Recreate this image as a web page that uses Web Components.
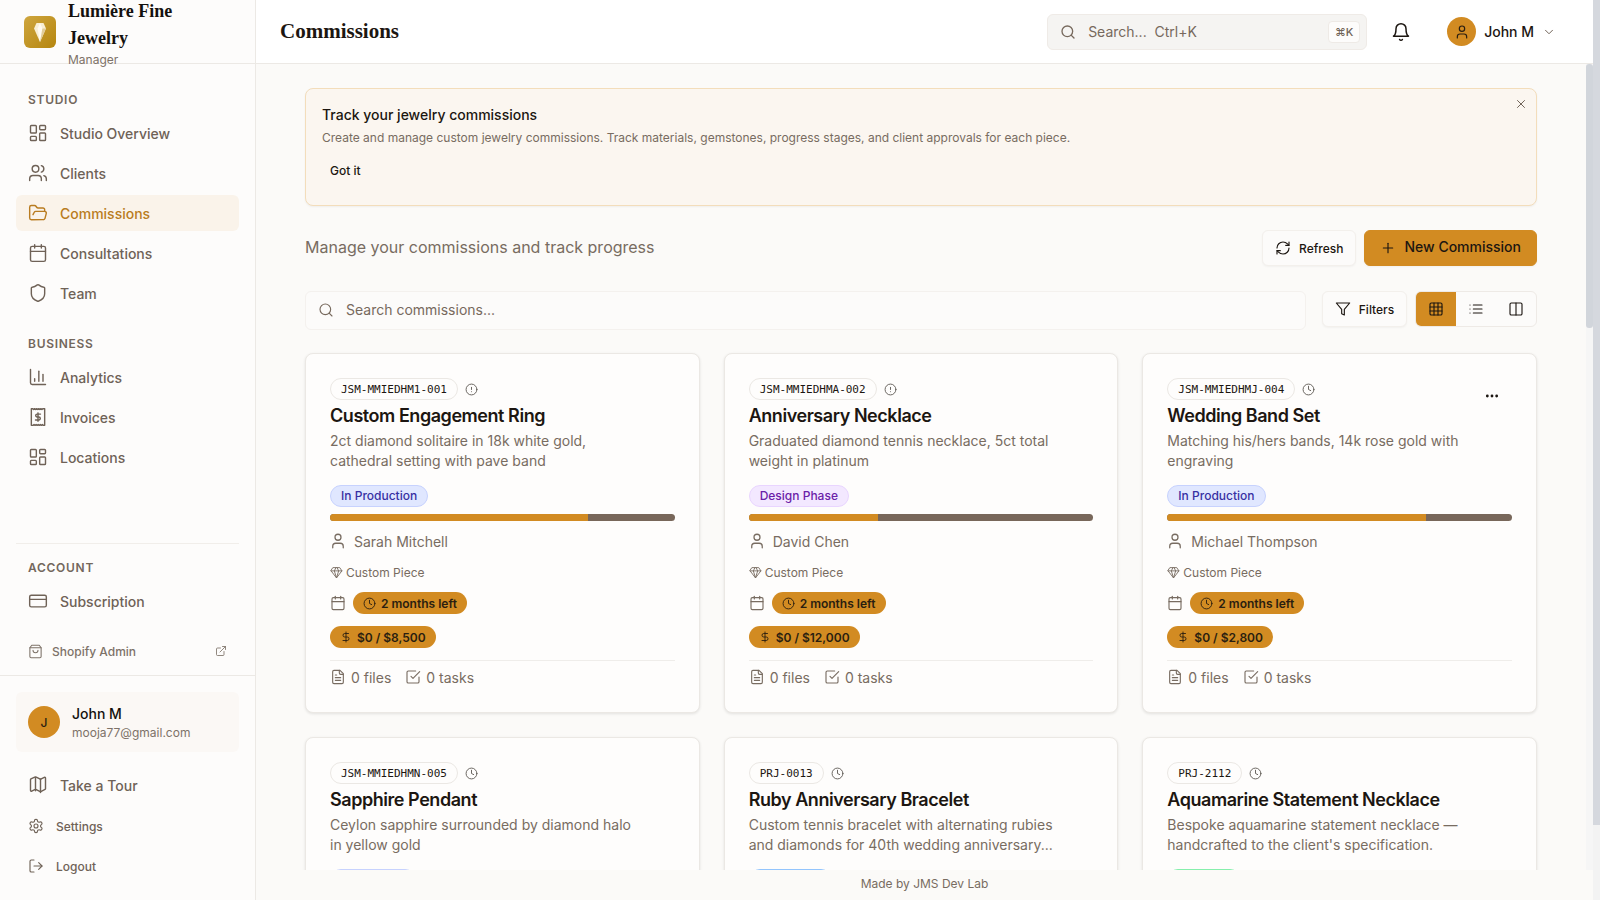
<!DOCTYPE html>
<html lang="en"><head><meta charset="utf-8"><title>Commissions</title>
<style>
html,body{margin:0;height:100%;overflow:hidden}
body{font-family:Inter,"Liberation Sans",sans-serif;background:#fbfaf8;color:#1c1611}
</style></head><body>
<app-shell></app-shell>
<script>
const P={
grid:'<rect x="3" y="3" width="7" height="9" rx="1"/><rect x="14" y="3" width="7" height="5" rx="1"/><rect x="14" y="12" width="7" height="9" rx="1"/><rect x="3" y="16" width="7" height="5" rx="1"/>',
users:'<path d="M16 21v-2a4 4 0 0 0-4-4H6a4 4 0 0 0-4 4v2"/><circle cx="9" cy="7" r="4"/><path d="M22 21v-2a4 4 0 0 0-3-3.87"/><path d="M16 3.13a4 4 0 0 1 0 7.75"/>',
folder:'<path d="m6 14 1.5-2.9A2 2 0 0 1 9.24 10H20a2 2 0 0 1 1.94 2.5l-1.54 6a2 2 0 0 1-1.95 1.5H4a2 2 0 0 1-2-2V5a2 2 0 0 1 2-2h3.9a2 2 0 0 1 1.69.9l.81 1.2a2 2 0 0 0 1.67.9H18a2 2 0 0 1 2 2v2"/>',
cal:'<path d="M8 2v4"/><path d="M16 2v4"/><rect x="3" y="4" width="18" height="18" rx="2"/><path d="M3 10h18"/>',
shield:'<path d="M20 13c0 5-3.5 7.5-7.66 8.95a1 1 0 0 1-.67-.01C7.5 20.5 4 18 4 13V6a1 1 0 0 1 1-1c2 0 4.5-1.2 6.24-2.72a1.17 1.17 0 0 1 1.52 0C14.51 3.81 17 5 19 5a1 1 0 0 1 1 1z"/>',
chart:'<path d="M3 3v16a2 2 0 0 0 2 2h16"/><path d="M18 17V9"/><path d="M13 17V5"/><path d="M8 17v-3"/>',
receipt:'<path d="M4 2h1.5l1.25 1 1.25-1 1.25 1 1.25-1 1.25 1 1.25-1 1.25 1 1.25-1 1.25 1L18 2h2v20h-1.5l-1.25-1-1.25 1-1.25-1-1.25 1-1.25-1-1.25 1-1.25-1-1.25 1-1.25-1L6 22H4z"/><path d="M15 8.5h-4a1.75 1.75 0 0 0 0 3.5h2a1.75 1.75 0 0 1 0 3.5H9"/><path d="M12 17V7"/>',
card:'<rect width="20" height="14" x="2" y="5" rx="2"/><path d="M2 10h20"/>',
bag:'<path d="M6 2 3 6v14a2 2 0 0 0 2 2h14a2 2 0 0 0 2-2V6l-3-4Z"/><path d="M3 6h18"/><path d="M16 10a4 4 0 0 1-8 0"/>',
ext:'<path d="M15 3h6v6"/><path d="M10 14 21 3"/><path d="M18 13v6a2 2 0 0 1-2 2H5a2 2 0 0 1-2-2V8a2 2 0 0 1 2-2h6"/>',
map:'<path d="M14.1 4.55a2 2 0 0 0 1.8 0l3.65-1.83A1 1 0 0 1 21 3.62v12.76a1 1 0 0 1-.55.9l-4.55 2.27a2 2 0 0 1-1.8 0l-4.2-2.1a2 2 0 0 0-1.8 0l-3.65 1.83A1 1 0 0 1 3 18.38V5.62a1 1 0 0 1 .55-.9L8.1 2.45a2 2 0 0 1 1.8 0z"/><path d="M15 5v16"/><path d="M9 3v16"/>',
gear:'<path d="M12.22 2h-.44a2 2 0 0 0-2 2v.18a2 2 0 0 1-1 1.73l-.43.25a2 2 0 0 1-2 0l-.15-.08a2 2 0 0 0-2.73.73l-.22.38a2 2 0 0 0 .73 2.73l.15.1a2 2 0 0 1 1 1.72v.51a2 2 0 0 1-1 1.74l-.15.09a2 2 0 0 0-.73 2.73l.22.38a2 2 0 0 0 2.73.73l.15-.08a2 2 0 0 1 2 0l.43.25a2 2 0 0 1 1 1.73V20a2 2 0 0 0 2 2h.44a2 2 0 0 0 2-2v-.18a2 2 0 0 1 1-1.73l.43-.25a2 2 0 0 1 2 0l.15.08a2 2 0 0 0 2.73-.73l.22-.39a2 2 0 0 0-.73-2.73l-.15-.08a2 2 0 0 1-1-1.74v-.5a2 2 0 0 1 1-1.74l.15-.09a2 2 0 0 0 .73-2.73l-.22-.38a2 2 0 0 0-2.73-.73l-.15.08a2 2 0 0 1-2 0l-.43-.25a2 2 0 0 1-1-1.73V4a2 2 0 0 0-2-2z"/><circle cx="12" cy="12" r="3"/>',
logout:'<path d="M9 21H5a2 2 0 0 1-2-2V5a2 2 0 0 1 2-2h4"/><path d="m16 17 5-5-5-5"/><path d="M21 12H9"/>',
search:'<circle cx="11" cy="11" r="8"/><path d="m21 21-4.3-4.3"/>',
bell:'<path d="M6 8a6 6 0 0 1 12 0c0 7 3 9 3 9H3s3-2 3-9"/><path d="M10.3 21a1.94 1.94 0 0 0 3.4 0"/>',
user:'<path d="M19 21v-2a4 4 0 0 0-4-4H9a4 4 0 0 0-4 4v2"/><circle cx="12" cy="7" r="4"/>',
chev:'<path d="m6 9 6 6 6-6"/>',
x:'<path d="M18 6 6 18"/><path d="m6 6 12 12"/>',
refresh:'<path d="M3 12a9 9 0 0 1 9-9 9.75 9.75 0 0 1 6.74 2.74L21 8"/><path d="M21 3v5h-5"/><path d="M21 12a9 9 0 0 1-9 9 9.75 9.75 0 0 1-6.74-2.74L3 16"/><path d="M8 16H3v5"/>',
plus:'<path d="M5 12h14"/><path d="M12 5v14"/>',
filter:'<polygon points="22 3 2 3 10 12.46 10 19 14 21 14 12.46 22 3"/>',
table:'<rect width="18" height="18" x="3" y="3" rx="2"/><path d="M3 9h18"/><path d="M3 15h18"/><path d="M9 3v18"/><path d="M15 3v18"/>',
list:'<path d="M8 6h13"/><path d="M8 12h13"/><path d="M8 18h13"/><path d="M3 6h.01"/><path d="M3 12h.01"/><path d="M3 18h.01"/>',
columns:'<rect width="18" height="18" x="3" y="3" rx="2"/><path d="M12 3v18"/>',
alert:'<circle cx="12" cy="12" r="10"/><path d="M12 8v4"/><path d="M12 16h.01"/>',
clock:'<circle cx="12" cy="12" r="10"/><path d="M12 6v6l4 2"/>',
gem:'<path d="M6 3h12l4 6-10 13L2 9Z"/><path d="M11 3 8 9l4 13 4-13-3-6"/><path d="M2 9h20"/>',
dollar:'<path d="M12 2v20"/><path d="M17 5H9.5a3.5 3.5 0 0 0 0 7h5a3.5 3.5 0 0 1 0 7H6"/>',
file:'<path d="M15 2H6a2 2 0 0 0-2 2v16a2 2 0 0 0 2 2h12a2 2 0 0 0 2-2V7Z"/><path d="M14 2v4a2 2 0 0 0 2 2h4"/><path d="M10 9H8"/><path d="M16 13H8"/><path d="M16 17H8"/>',
check:'<path d="m9 11 3 3L22 4"/><path d="M21 12v7a2 2 0 0 1-2 2H5a2 2 0 0 1-2-2V5a2 2 0 0 1 2-2h11"/>',
dots:'<circle cx="12" cy="12" r="1"/><circle cx="19" cy="12" r="1"/><circle cx="5" cy="12" r="1"/>'
};
const ic=(n,s,c='currentColor',w=2)=>`<svg xmlns="http://www.w3.org/2000/svg" width="${s}" height="${s}" viewBox="0 0 24 24" fill="none" stroke="${c}" stroke-width="${w}" stroke-linecap="round" stroke-linejoin="round" style="display:block;flex:none">${P[n]}</svg>`;
const def=(name,css,html)=>{customElements.define(name,class extends HTMLElement{
 connectedCallback(){const r=this.attachShadow({mode:'open'});r.innerHTML=`<style>${css}</style>`+(typeof html==='function'?html(this):html);}
});};

def('side-link',`:host{display:flex;align-items:center;gap:var(--g,12px);height:var(--h,36px);padding:0 12px;border-radius:6px;color:#6f6257;font-size:var(--fs,14px);font-weight:500;margin-bottom:var(--mb,4px)}
:host([active]){background:#faf3ea;color:#b97c21}`,h=>ic(h.getAttribute('icon'),+h.getAttribute('size')||20,'currentColor',1.7)+`<slot></slot>`);

def('side-group',`:host{display:block;padding:0 16px}
h3{margin:0;padding:0 12px;font-size:12px;font-weight:600;letter-spacing:.72px;color:#73675c;height:20px;line-height:20px;margin-bottom:5px}`,h=>`<h3>${h.getAttribute('label')}</h3><slot></slot>`);

def('app-sidebar',`:host{display:flex;flex-direction:column;width:255px;border-right:1px solid #ece9e5;background:#fdfcfb;height:900px;flex:none;overflow:hidden}
.brand{height:63px;border-bottom:1px solid #ece9e5;display:flex;align-items:center;gap:12px;padding:0 24px;flex:none}
.logo{width:32px;height:32px;border-radius:6px;background:linear-gradient(135deg,#cfa63e,#b5860f);display:flex;align-items:center;justify-content:center;flex:none}
.t{font-family:"Liberation Serif",serif;font-size:18px;font-weight:700;line-height:27px;color:#14110e;width:120px;padding-top:3px}
.m{font-size:12px;color:#7d7268;line-height:16px}
.sp{flex:1}
.rule{height:1px;background:#f1eeea;margin:0 16px 14px}
.foot{flex:none}
.shop{display:flex;align-items:center;height:36px;margin:0 28px;color:#7d7268;font-size:12px;font-weight:500;gap:9px;margin-bottom:6px}
.shop span{flex:1}
.hr{height:1px;background:#ece9e5;margin-bottom:16px}
.user{margin:0 16px 15px;height:60px;background:#fbf8f5;border-radius:6px;display:flex;align-items:center;gap:12px;padding:0 12px}
.av{width:32px;height:32px;border-radius:50%;background:#d28b22;display:flex;align-items:center;justify-content:center;font-size:12px;font-weight:500;color:#2a1e10}
.who{padding-top:3px}
.n{font-size:14px;font-weight:500;line-height:18px;color:#14110e}.e{font-size:12px;color:#7d7268;line-height:18px;margin-top:1px}
.pad{padding:0 16px}
`,`<div class="brand"><div class="logo"><svg width="12" height="20" viewBox="0 0 12 20"><path d="M2.500 1h7L12 6.500 6 20 0 6.500Z" fill="#f8eed4"/><path d="M6 20 3.600 6.500 6 1l2.400 5.500Z" fill="#fffaf0"/><path d="M6 20 12 6.500H8.400Z" fill="#e2cd98"/></svg></div>
<div><div class="t">Lumière Fine Jewelry</div><div class="m">Manager</div></div></div>
<div style="height:26px;flex:none"></div>
<side-group label="STUDIO"><side-link icon="grid">Studio Overview</side-link><side-link icon="users">Clients</side-link><side-link icon="folder" active>Commissions</side-link><side-link icon="cal">Consultations</side-link><side-link icon="shield">Team</side-link></side-group>
<div style="height:19px;flex:none"></div>
<side-group label="BUSINESS"><side-link icon="chart">Analytics</side-link><side-link icon="receipt">Invoices</side-link><side-link icon="grid">Locations</side-link></side-group>
<div class="sp"></div><div class="rule"></div>
<side-group label="ACCOUNT"><side-link icon="card">Subscription</side-link></side-group>
<div class="foot"><div style="height:10px"></div><div class="shop">${ic('bag',15,'currentColor',1.7)}<span>Shopify Admin</span>${ic('ext',12,'currentColor',1.7)}</div>
<div class="hr"></div>
<div class="user"><div class="av">J</div><div class="who"><div class="n">John M</div><div class="e">mooja77@gmail.com</div></div></div>
<div class="pad"><side-link icon="map" style="--mb:5px">Take a Tour</side-link><side-link icon="gear" size="16" style="--fs:12px">Settings</side-link><side-link icon="logout" size="16" style="--fs:12px;--mb:16px">Logout</side-link></div></div>`);

def('app-topbar',`:host{display:flex;align-items:center;height:63px;border-bottom:1px solid #ece9e5;background:#fff;padding:0 24px;flex:none}
h1{margin:0;flex:1;font-family:"Liberation Serif",serif;font-size:21px;font-weight:700;color:#1c1611}
.s{width:320px;height:36px;box-sizing:border-box;background:#f5f4f2;border:1px solid #efebe7;border-radius:6px;display:flex;align-items:center;padding:0 6px 0 12px;gap:12px;color:#77695d;font-size:14px}
.s span{flex:1}
kbd{font:500 11px Inter,sans-serif;background:#fdfcfb;border:1px solid #eeeae6;border-radius:4px;width:30px;height:20px;display:flex;align-items:center;justify-content:center;color:#6f6257}
.b{margin:0 36px 0 24px;color:#1c1611}
.u{display:flex;align-items:center;gap:8px;font-size:14px;font-weight:500;margin-right:20px;color:#1c1611}
.a{width:29px;height:29px;border-radius:50%;background:#d28b22;display:flex;align-items:center;justify-content:center;color:#2a1e10}
`,`<h1>Commissions</h1><div class="s">${ic('search',16,'#77695d')}<span>Search...&nbsp; Ctrl+K</span><kbd>⌘K</kbd></div>
<div class="b">${ic('bell',20,'currentColor',1.8)}</div><div class="u"><div class="a">${ic('user',16,'currentColor',1.8)}</div>John M <span style="color:#6f6257">${ic('chev',14,'currentColor',1.7)}</span></div>`);

def('info-banner',`:host{display:block;position:relative;box-sizing:border-box;height:118px;border:1px solid #f3ddbb;border-radius:8px;background:#fbf6f0;padding:17px 16px;box-shadow:0 1px 2px rgba(0,0,0,.05);margin-bottom:24px}
h2{margin:0;font-size:14px;font-weight:500;line-height:18px;color:#1c1611}
p{margin:4px 0 0;font-size:12px;line-height:20px;color:#786c61}
b{display:block;margin:13px 0 0 8px;font-size:12px;font-weight:500;line-height:20px;color:#1c1611}
.x{position:absolute;right:8px;top:8px;color:#6f6257}`,`<h2>Track your jewelry commissions</h2><p>Create and manage custom jewelry commissions. Track materials, gemstones, progress stages, and client approvals for each piece.</p><b>Got it</b><div class="x">${ic('x',14,'currentColor',1.7)}</div>`);

def('ui-btn',`:host{display:flex;align-items:center;justify-content:center;box-sizing:border-box;height:36px;gap:8px;border-radius:6px;font-size:12px;font-weight:500;color:#1c1611;background:#fcfbfa;border:1px solid #f3f0ec;box-shadow:0 1px 2px rgba(0,0,0,.04);padding:0 12px}
span{display:block}
:host([primary]){background:#d28b22;border-color:#d28b22;font-size:14px;padding:0 15px}
:host([primary]) span{padding-bottom:3px}`,h=>ic(h.getAttribute('icon'),16,'currentColor',1.7)+'<span><slot></slot></span>');

def('view-toggle',`:host{display:flex;box-sizing:border-box;height:36px;width:122px;border:1px solid #eeeae6;border-radius:6px;overflow:hidden;background:#fcfbfa;margin-left:-8px}
div{flex:1;display:flex;align-items:center;justify-content:center;color:#1c1611}div.on{background:#d28b22}`,`<div class="on">${ic('table',16,'currentColor',1.7)}</div><div>${ic('list',16,'currentColor',1.7)}</div><div>${ic('columns',16,'currentColor',1.7)}</div>`);

def('search-field',`:host{flex:1;display:flex;align-items:center;box-sizing:border-box;height:39px;border:1px solid #f4f1ee;border-radius:6px;padding:0 12px;gap:12px;color:#77695d;font-size:14px;background:#fcfbfa}`,`${ic('search',16,'currentColor',1.7)}<span>Search commissions...</span>`);

def('commission-card',`:host{display:block;box-sizing:border-box;height:360px;background:#fefdfc;border:1px solid #ebe8e4;border-radius:8px;padding:24px;position:relative;box-shadow:0 1px 3px rgba(0,0,0,.1)}
.top{display:flex;align-items:center;gap:7px;height:22px}
.id{font:400 11px/22px "DejaVu Sans Mono",monospace;border:1px solid #ebe8e4;border-radius:11px;height:20px;padding:0 10px;color:#1c1611;background:#fefdfc}
h3{margin:4px 0 0;font-size:18px;font-weight:600;line-height:24px;letter-spacing:-.45px;color:#1c1611}
p{margin:3px 0 0;font-size:14px;line-height:20px;color:#786c61;height:40px;width:310px}
.st{display:inline-block;box-sizing:border-box;margin-top:14px;height:22px;line-height:20px;border-radius:11px;padding:0 10px;font-size:12px;font-weight:500;border:1px solid}
.bar{height:7px;border-radius:4px;background:#78675a;margin-top:7px;overflow:hidden}.bar i{display:block;height:100%;background:#d28b22}
.r{display:flex;align-items:center;color:#786c61}
.cl{font-size:14px;gap:7px;margin:10px 0 0 -1px;height:20px}
.ty{font-size:12px;gap:3px;margin-top:12px;height:18px}
.du{font-size:12px;gap:7px;margin-top:11px;height:22px}
.pill{display:inline-flex;align-items:center;gap:5px;height:22px;border-radius:11px;background:#d28b22;color:#2a1e10;font-size:12px;font-weight:600;padding:0 10px}
.bu{margin-top:12px;height:22px}
.hr{height:1px;background:#efedea;margin-top:12px}
.fo{font-size:14px;gap:5px;margin-top:6px;height:20px}.fo span{margin-right:9px}
.more{position:absolute;right:28px;top:26px;color:#1c1611;width:32px;height:32px;display:flex;align-items:center;justify-content:center}
`,h=>{const a=n=>h.getAttribute(n);const head=`<div class="top"><span class="id">${a('code')}</span><span style="color:#5f5a55">${ic(a('mark')||'clock',13,'currentColor',1.7)}</span></div>
<h3>${a('name')}</h3><p>${a('desc')}</p>`;
if(a('cut')!==null)return head+`<div><span class="st" style="width:${a('sw')}px;background:${a('sbg')};border-color:${a('sbd')}">&nbsp;</span></div>`;
return head+`<div><span class="st" style="background:${a('sbg')};color:${a('sfg')};border-color:${a('sbd')}">${a('status')}</span></div>
<div class="bar"><i style="width:${a('pct')}%"></i></div>
<div class="r cl">${ic('user',18,'currentColor',1.7)}${a('client')}</div>
<div class="r ty">${ic('gem',13,'currentColor',1.7)}Custom Piece</div>
<div class="r du">${ic('cal',16,'currentColor',1.7)}<span class="pill">${ic('clock',13,'currentColor',1.7)}2 months left</span></div>
<div class="bu"><span class="pill">${ic('dollar',12,'currentColor',1.8)}$0 / ${a('budget')}</span></div>
<div class="hr"></div>
<div class="r fo">${ic('file',16,'currentColor',1.7)}<span>0 files</span>${ic('check',16,'currentColor',1.7)}<span>0 tasks</span></div>
${a('more')!==null?`<div class="more">${ic('dots',16,'currentColor',2.2)}</div>`:''}`});

def('app-shell',`:host{display:flex;height:900px;width:1600px;overflow:hidden}
.right{flex:1;display:flex;flex-direction:column;min-width:0;position:relative}
.body{flex:1;display:flex;min-height:0}
.scroll{flex:1;min-width:0;overflow:hidden;padding:24px 49px 0 49px;height:806px;background:#fbfaf8}
.sb1{width:7px;flex:none;background:#f6f6f6;position:relative}
.sb1 i{position:absolute;top:0;left:0;right:0;height:264px;background:#d1d5db;border-radius:3px}
.sb2{position:absolute;right:0;top:0;bottom:0;width:7px;background:#f3f3f3}
.sb2 i{position:absolute;top:0;left:0;right:0;bottom:75px;background:#d5d8de}
.head{display:flex;align-items:center;height:36px;gap:8px;margin-bottom:25px}
.head span{flex:1;font-size:16px;color:#786c61;padding-bottom:2px}
.tools{display:flex;align-items:flex-start;height:40px;gap:16px;margin-bottom:22px}
.tools ui-btn{width:85px}
.tools search-field{padding-bottom:2px}
.grid{display:grid;grid-template-columns:repeat(3,1fr);gap:24px}
.foot{position:absolute;left:0;right:7px;bottom:0;height:30px;box-sizing:border-box;padding-bottom:4px;display:flex;align-items:center;justify-content:center;font-size:12px;color:#786c61;background:#fbfaf8}
`,`<app-sidebar></app-sidebar><div class="right"><app-topbar></app-topbar><div class="body"><div class="scroll">
<info-banner></info-banner>
<div class="head"><span>Manage your commissions and track progress</span><ui-btn icon="refresh">Refresh</ui-btn><ui-btn icon="plus" primary>New Commission</ui-btn></div>
<div class="tools"><search-field></search-field><ui-btn icon="filter">Filters</ui-btn><view-toggle></view-toggle></div>
<div class="grid">
<commission-card code="JSM-MMIEDHM1-001" mark="alert" name="Custom Engagement Ring" desc="2ct diamond solitaire in 18k white gold, cathedral setting with pave band" status="In Production" sbg="#e0e7ff" sfg="#3730a3" sbd="#c7d2fe" pct="75" client="Sarah Mitchell" budget="$8,500"></commission-card>
<commission-card code="JSM-MMIEDHMA-002" mark="alert" name="Anniversary Necklace" desc="Graduated diamond tennis necklace, 5ct total weight in platinum" status="Design Phase" sbg="#f3e8ff" sfg="#6b21a8" sbd="#e9d5ff" pct="37.5" client="David Chen" budget="$12,000"></commission-card>
<commission-card more code="JSM-MMIEDHMJ-004" name="Wedding Band Set" desc="Matching his/hers bands, 14k rose gold with engraving" status="In Production" sbg="#e0e7ff" sfg="#3730a3" sbd="#c7d2fe" pct="75" client="Michael Thompson" budget="$2,800"></commission-card>
<commission-card cut sw="86" code="JSM-MMIEDHMN-005" name="Sapphire Pendant" desc="Ceylon sapphire surrounded by diamond halo in yellow gold" sbg="#e0e7ff" sbd="#c7d2fe"></commission-card>
<commission-card cut sw="83" code="PRJ-0013" name="Ruby Anniversary Bracelet" desc="Custom tennis bracelet with alternating rubies and diamonds for 40th wedding anniversary..." sbg="#dbeafe" sbd="#93c5fd"></commission-card>
<commission-card cut sw="74" code="PRJ-2112" name="Aquamarine Statement Necklace" desc="Bespoke aquamarine statement necklace — handcrafted to the client's specification." sbg="#dcfce7" sbd="#86efac"></commission-card>
</div></div><div class="sb1"><i></i></div><div style="width:7px;flex:none"></div></div>
<div class="foot">Made by JMS Dev Lab</div><div class="sb2"><i></i></div></div>`);
</script></body></html>
